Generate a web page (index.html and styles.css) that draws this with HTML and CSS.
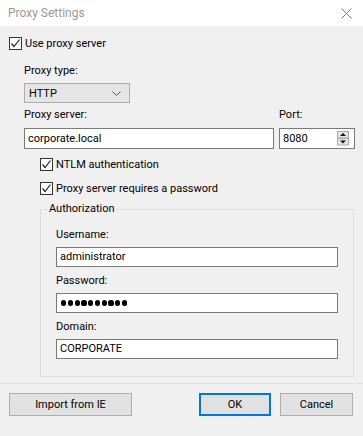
FILE: index.html
```html
<!DOCTYPE html>
<html lang="en">
<head>
    <meta charset="UTF-8">
    <title>Proxy Settings</title>
    <link rel="stylesheet" href="styles.css">
</head>
<body>
    <div class="window">
        <div class="titlebar">
            <span class="title">Proxy Settings</span>
            <svg class="close" width="11" height="11" viewBox="0 0 11 11">
                <path d="M0.5 0.5 L10.5 10.5 M10.5 0.5 L0.5 10.5" stroke="#808080" stroke-width="1" fill="none"/>
            </svg>
        </div>

        <div class="content">
            <div class="check-row use-proxy">
                <span class="check"><svg width="11" height="11" viewBox="0 0 11 11"><path d="M1.5 5.5 L4 8.5 L9.5 1.5" stroke="#222" stroke-width="1.2" fill="none"/></svg></span>
                <span>Use proxy server</span>
            </div>

            <div class="indent">
                <div class="label type-label">Proxy type:</div>
                <div class="select">
                    <span>HTTP</span>
                    <svg width="9" height="5" viewBox="0 0 9 5"><path d="M0.5 0.5 L4.5 4.5 L8.5 0.5" stroke="#555" fill="none"/></svg>
                </div>

                <div class="server-row">
                    <div class="server-col">
                        <div class="label">Proxy server:</div>
                        <div class="field">corporate.local</div>
                    </div>
                    <div class="port-col">
                        <div class="label">Port:</div>
                        <div class="field port">
                            <span>8080</span>
                            <svg class="spin" width="12" height="15" viewBox="0 0 12 15">
                                <rect x="0.5" y="0.5" width="11" height="6.5" fill="#e5e5e5" stroke="#adadad"/>
                                <rect x="0.5" y="7.5" width="11" height="6.5" fill="#e5e5e5" stroke="#adadad"/>
                                <path d="M6 2 L9 5 L3 5 Z" fill="#111"/>
                                <path d="M3 9.5 L9 9.5 L6 12.5 Z" fill="#111"/>
                            </svg>
                        </div>
                    </div>
                </div>

                <div class="sub">
                    <div class="check-row ntlm">
                        <span class="check"><svg width="11" height="11" viewBox="0 0 11 11"><path d="M1.5 5.5 L4 8.5 L9.5 1.5" stroke="#222" stroke-width="1.2" fill="none"/></svg></span>
                        <span>NTLM authentication</span>
                    </div>
                    <div class="check-row needs-pass">
                        <span class="check"><svg width="11" height="11" viewBox="0 0 11 11"><path d="M1.5 5.5 L4 8.5 L9.5 1.5" stroke="#222" stroke-width="1.2" fill="none"/></svg></span>
                        <span>Proxy server requires a password</span>
                    </div>

                    <fieldset class="auth">
                        <legend>Authorization</legend>
                        <div class="label first">Username:</div>
                        <div class="field">administrator</div>
                        <div class="label">Password:</div>
                        <div class="field dots">
                            <span class="dot"></span><span class="dot"></span><span class="dot"></span><span class="dot"></span><span class="dot"></span><span class="dot"></span><span class="dot"></span><span class="dot"></span><span class="dot"></span><span class="dot"></span>
                        </div>
                        <div class="label">Domain:</div>
                        <div class="field">CORPORATE</div>
                    </fieldset>
                </div>
            </div>
        </div>

        <div class="footer">
            <button class="btn import">Import from IE</button>
            <div class="right-buttons">
                <button class="btn ok">OK</button>
                <button class="btn">Cancel</button>
            </div>
        </div>
    </div>
</body>
</html>
```

FILE: styles.css
```css
body {
    margin: 0;
    font-family: Roboto, 'Liberation Sans', sans-serif;
    font-size: 11px;
    color: #000;
    background: #f0f0f0;
}
.window {
    width: 363px;
    height: 436px;
    background: #f0f0f0;
}
.titlebar {
    height: 26px;
    background: #fff;
    display: flex;
    align-items: center;
    justify-content: space-between;
    padding: 0 11px 0 8px;
    box-sizing: border-box;
}
.title {
    color: #999;
    font-size: 12px;
}
.content {
    padding: 11px 0 0 9px;
    height: 357px;
    box-sizing: border-box;
}
.check-row {
    display: flex;
    align-items: center;
    height: 13px;
    line-height: 16px;
}
.check {
    width: 13px;
    height: 13px;
    border: 1px solid #333;
    background: #fff;
    box-sizing: border-box;
    margin-right: 3px;
    display: flex;
    align-items: center;
    justify-content: center;
}
.indent {
    padding-left: 15px;
}
.label {
    line-height: 16px;
    height: 16px;
}
.type-label {
    margin-top: 13px;
}
.select {
    margin-top: 4px;
    width: 106px;
    height: 20px;
    box-sizing: border-box;
    background: #e5e5e5;
    border: 1px solid #acacac;
    display: flex;
    align-items: center;
    justify-content: space-between;
    padding: 0 8px 0 4px;
}
.server-row {
    display: flex;
    gap: 5px;
    margin-top: 4px;
}
.server-col {
    width: 250px;
}
.port-col {
    width: 76px;
}
.field {
    margin-top: 5px;
    height: 21px;
    box-sizing: border-box;
    border: 1px solid #7a7a7a;
    background: #fff;
    padding-left: 3px;
    line-height: 19px;
    white-space: nowrap;
}
.port {
    display: flex;
    align-items: center;
    justify-content: space-between;
    padding-right: 5px;
}
.sub {
    padding-left: 16px;
}
.ntlm {
    margin-top: 9px;
}
.needs-pass {
    margin-top: 11px;
}
.auth {
    margin: 6px 0 0 0;
    width: 314px;
    box-sizing: border-box;
    border: 1px solid #dcdcdc;
    padding: 10px 15px 17px 15px;
}
.auth legend {
    padding: 0 1px;
    margin-left: -8px;
    line-height: 16px;
}
.auth .label {
    margin-top: 6px;
}
.auth .label.first {
    margin-top: 0;
}
.auth .field {
    margin-top: 4px;
    height: 20px;
    line-height: 18px;
}
.dots {
    display: flex;
    align-items: center;
    gap: 1.6px;
    padding-left: 4px;
}
.dot {
    width: 5.2px;
    height: 5.2px;
    border-radius: 50%;
    background: #000;
}
.footer {
    border-top: 1px solid #dfdfdf;
    display: flex;
    justify-content: space-between;
    padding: 9px 10px 0 9px;
}
.right-buttons {
    display: flex;
    gap: 9px;
}
.btn {
    font-family: Roboto, 'Liberation Sans', sans-serif;
    font-size: 11px;
    height: 23px;
    width: 73px;
    background: #e1e1e1;
    border: 1px solid #adadad;
    padding: 0;
    color: #000;
}
.btn.import {
    width: 123px;
}
.btn.ok {
    width: 72px;
    border: 2px solid #0078d7;
}
```
